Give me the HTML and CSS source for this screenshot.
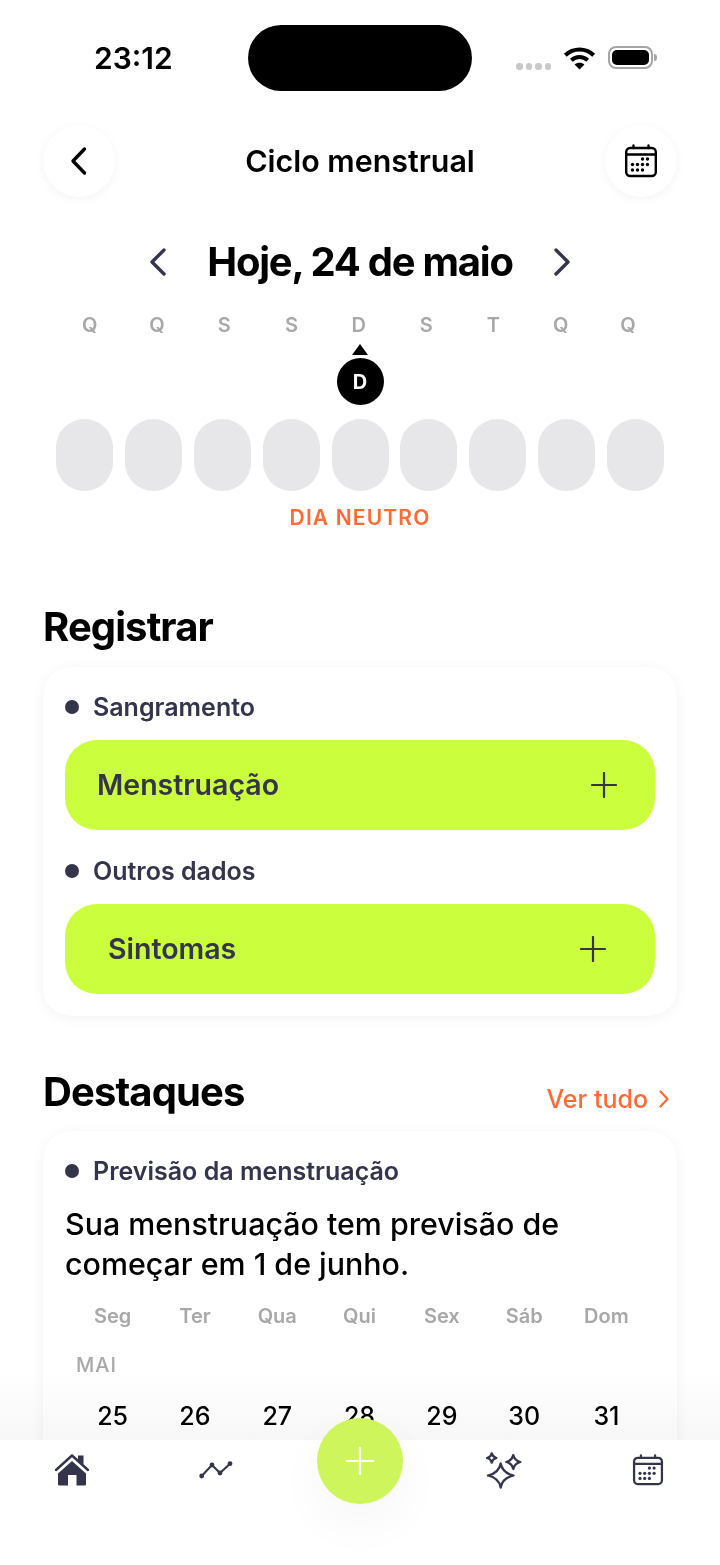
FILE: index.html
```html
<!DOCTYPE html>
<html lang="pt">
<head>
<meta charset="utf-8">
<title>Ciclo menstrual</title>
<link rel="stylesheet" href="styles.css">
</head>
<body>
<div class="screen">
  <div class="status">
    <span class="time">23:12</span>
    <div class="island"></div>
    <div class="status-icons">
      <div class="signal"><i></i><i></i><i></i><i></i></div>
      <svg class="wifi" width="33" height="24" viewBox="0 0 30 22"><path d="M2 8.500C9.500 1.500 20.500 1.500 28 8.500" fill="none" stroke="#000" stroke-width="3.800"/><path d="M7.500 13C11.800 9.200 18.200 9.200 22.500 13" fill="none" stroke="#000" stroke-width="3.600"/><path d="M15 21.500L10.500 17C13 14.800 17 14.800 19.500 17Z" fill="#000"/></svg>
      <div class="battery"><div class="battery-fill"></div></div>
      <div class="battery-cap"></div>
    </div>
  </div>

  <header class="topbar">
    <button class="round-btn">
      <svg width="24" height="30" viewBox="0 0 24 30"><path d="M17.500 3L6 15L17.500 27" fill="none" stroke="#000" stroke-width="3.400" stroke-linecap="round" stroke-linejoin="round"/></svg>
    </button>
    <h1 class="title">Ciclo menstrual</h1>
    <button class="round-btn">
      <svg width="34" height="34" viewBox="0 0 34 34"><rect x="2.200" y="4" width="29.600" height="28" rx="4" fill="none" stroke="#000" stroke-width="2.400"/><path d="M2.200 10.500H31.800M9.500 1.500V4M24.500 1.500V4" stroke="#000" stroke-width="2.400" stroke-linecap="round"/><g fill="#000"><circle cx="18.500" cy="15" r="1.700"/><circle cx="23.500" cy="15" r="1.700"/><circle cx="8.500" cy="20.500" r="1.700"/><circle cx="13.500" cy="20.500" r="1.700"/><circle cx="18.500" cy="20.500" r="1.700"/><circle cx="23.500" cy="20.500" r="1.700"/><circle cx="8.500" cy="26" r="1.700"/><circle cx="13.500" cy="26" r="1.700"/><circle cx="18.500" cy="26" r="1.700"/></g></svg>
    </button>
  </header>

  <div class="date-row">
    <svg width="20" height="30" viewBox="0 0 20 30"><path d="M16 3L4 15L16 27" fill="none" stroke="#34344a" stroke-width="3.400" stroke-linecap="round" stroke-linejoin="round"/></svg>
    <h2 class="date">Hoje, 24 de maio</h2>
    <svg width="20" height="30" viewBox="0 0 20 30"><path d="M4 3L16 15L4 27" fill="none" stroke="#34344a" stroke-width="3.400" stroke-linecap="round" stroke-linejoin="round"/></svg>
  </div>

  <div class="week-letters"><span>Q</span><span>Q</span><span>S</span><span>S</span><span>D</span><span>S</span><span>T</span><span>Q</span><span>Q</span></div>
  <div class="pointer"></div>
  <div class="today">D</div>
  <div class="pills"><i></i><i></i><i></i><i></i><i></i><i></i><i></i><i></i><i></i></div>
  <p class="day-label">DIA NEUTRO</p>

  <h2 class="section registrar">Registrar</h2>
  <section class="card card-register">
    <div class="label"><i></i>Sangramento</div>
    <div class="action action-a"><span>Menstruação</span>
      <svg width="26" height="26" viewBox="0 0 26 26"><path d="M13 1V25M1 13H25" stroke="#34344a" stroke-width="2.200" stroke-linecap="round"/></svg>
    </div>
    <div class="label label-second"><i></i>Outros dados</div>
    <div class="action action-b"><span>Sintomas</span>
      <svg width="26" height="26" viewBox="0 0 26 26"><path d="M13 1V25M1 13H25" stroke="#34344a" stroke-width="2.200" stroke-linecap="round"/></svg>
    </div>
  </section>

  <div class="section-row">
    <h2 class="section">Destaques</h2>
    <div class="see-all">Ver tudo
      <svg width="12" height="20" viewBox="0 0 12 20"><path d="M2.500 2.500L9.500 10L2.500 17.500" fill="none" stroke="#ff6b35" stroke-width="2.200" stroke-linecap="round" stroke-linejoin="round"/></svg>
    </div>
  </div>
  <section class="card card-forecast">
    <div class="label"><i></i>Previsão da menstruação</div>
    <p class="forecast">Sua menstruação tem previsão de<br>começar em 1 de junho.</p>
    <div class="cal cal-head"><span>Seg</span><span>Ter</span><span>Qua</span><span>Qui</span><span>Sex</span><span>Sáb</span><span>Dom</span></div>
    <div class="month">MAI</div>
    <div class="cal cal-days"><span>25</span><span>26</span><span>27</span><span>28</span><span>29</span><span>30</span><span>31</span></div>
  </section>

  <div class="fade"></div>
  <nav class="nav">
    <svg class="nav-home" width="36" height="34" viewBox="0 0 36 34"><path d="M2 17L18 2.500L34 17" fill="none" stroke="#34344a" stroke-width="2.400" stroke-linejoin="round" stroke-linecap="round"/><path d="M24 2.500H29.500V11.500L24 6.800Z" fill="#34344a"/><path d="M18 8L32 20.500V31C32 32 31.500 32.500 30.500 32.500H22.500V22H14V32.500H5.500C4.500 32.500 4 32 4 31V20.500Z" fill="#34344a"/></svg>
    <svg class="nav-trend" width="36" height="20" viewBox="0 0 36 20"><path d="M3.700 16L14 5L22 13L32 3.700" fill="none" stroke="#34344a" stroke-width="2"/><g fill="#34344a"><circle cx="3.700" cy="16" r="2.400"/><circle cx="14" cy="5" r="2.400"/><circle cx="22" cy="13" r="2.400"/><circle cx="32" cy="3.700" r="2.400"/></g></svg>
    <div class="nav-gap"></div>
    <svg class="nav-spark" width="38" height="38" viewBox="0 0 38 38"><g fill="none" stroke="#34344a" stroke-width="2.300" stroke-linejoin="round"><path d="M15.700 11.500Q17.500 21 28.500 23.500Q17.500 26 15.700 35.500Q14 26 3 23.500Q14 21 15.700 11.500Z"/><path d="M6.700 1.300Q7.500 5 11.400 6Q7.500 7 6.700 10.700Q6 7 2 6Q6 5 6.700 1.300Z"/><path d="M28.300 3Q29.500 8.500 35.300 10Q29.500 11.500 28.300 17Q27 11.500 21.300 10Q27 8.500 28.300 3Z"/></g></svg>
    <svg class="nav-cal" width="32" height="34" viewBox="0 0 34 34"><rect x="2.200" y="4" width="29.600" height="28" rx="4" fill="none" stroke="#34344a" stroke-width="2.400"/><path d="M2.200 10.500H31.800M9.500 1.500V4M24.500 1.500V4" stroke="#34344a" stroke-width="2.400" stroke-linecap="round"/><g fill="#34344a"><circle cx="18.500" cy="15" r="1.700"/><circle cx="23.500" cy="15" r="1.700"/><circle cx="8.500" cy="20.500" r="1.700"/><circle cx="13.500" cy="20.500" r="1.700"/><circle cx="18.500" cy="20.500" r="1.700"/><circle cx="23.500" cy="20.500" r="1.700"/><circle cx="8.500" cy="26" r="1.700"/><circle cx="13.500" cy="26" r="1.700"/><circle cx="18.500" cy="26" r="1.700"/></g></svg>
  </nav>
  <button class="fab">
    <svg width="28" height="28" viewBox="0 0 28 28"><path d="M14 1V27M1 14H27" stroke="#fff" stroke-width="2.200" stroke-linecap="round"/></svg>
  </button>
</div>
</body>
</html>
```
FILE: styles.css
```css
* { box-sizing: border-box; margin: 0; padding: 0; }
html, body { width: 720px; height: 1565px; overflow: hidden; background: #fff; }
body { font-family: Inter, "Noto Sans", sans-serif; color: #000; }
.screen { position: relative; width: 720px; height: 1565px; overflow: hidden; background: #fff; }

.status { position: relative; height: 125px; }
.time { position: absolute; left: 94px; top: 40px; font-size: 30px; line-height: 36px; font-weight: 600; }
.island { position: absolute; left: 248px; top: 25px; width: 224px; height: 66px; border-radius: 33px; background: #000; }
.status-icons { position: absolute; left: 516px; top: 45px; width: 142px; height: 28px; }
.signal { position: absolute; left: 0; top: 18px; display: flex; gap: 3px; }
.signal i { width: 6.500px; height: 6.500px; border-radius: 50%; background: #c9c9c9; }
.wifi { position: absolute; left: 47px; top: 1px; }
.battery { position: absolute; left: 92px; top: 1px; width: 45px; height: 23px; border: 2px solid #a5a5a5; border-radius: 8px; padding: 2px; }
.battery-fill { width: 100%; height: 100%; border-radius: 5px; background: #000; }
.battery-cap { position: absolute; left: 138px; top: 9px; width: 3px; height: 7px; border-radius: 0 3px 3px 0; background: #a5a5a5; }

.topbar { display: flex; align-items: center; justify-content: space-between; padding: 0 43px; height: 72px; }
.round-btn { width: 72px; height: 72px; border: 0; border-radius: 50%; background: #fff; box-shadow: 0 2px 10px rgba(0,0,0,.05); display: flex; align-items: center; justify-content: center; }
.title { font-size: 30.400px; font-weight: 600; line-height: 36px; }

.date-row { display: flex; align-items: center; justify-content: center; gap: 39px; margin-top: 41px; height: 48px; }
.date { font-size: 40px; font-weight: 700; line-height: 48px; letter-spacing: -1.250px; }

.week-letters { display: grid; grid-template-columns: repeat(9, 67.300px); padding-left: 56px; margin-top: 26px; height: 26px; }
.week-letters span { text-align: center; font-size: 20px; line-height: 26px; font-weight: 600; color: #a8a8a8; }
.pointer { width: 0; height: 0; margin: 6px auto 0; border-left: 8px solid transparent; border-right: 8px solid transparent; border-bottom: 11px solid #000; }
.today { width: 47px; height: 47px; margin: 3px auto 0; border-radius: 50%; background: #000; color: #fff; font-size: 20px; font-weight: 700; display: flex; align-items: center; justify-content: center; }
.pills { display: flex; gap: 11.875px; padding-left: 56px; margin-top: 14px; }
.pills i { flex: none; width: 57px; height: 72px; border-radius: 28.500px; background: #e7e7e9; }
.day-label { margin-top: 13px; text-align: center; font-size: 21px; line-height: 28px; font-weight: 600; letter-spacing: 1.150px; color: #ff6b35; }

.section { font-size: 40px; line-height: 48px; font-weight: 700; letter-spacing: -.9px; }
.registrar { margin: 71px 0 0 43px; }

.card { margin: 16px 43px 0; background: #fff; border-radius: 28px; box-shadow: 0 2px 14px rgba(0,0,0,.05); padding: 25px 22px 22px; }
.card-register { height: 349px; }
.label { display: flex; align-items: center; gap: 14px; font-size: 25px; line-height: 30px; font-weight: 600; color: #34344a; }
.label i { width: 14px; height: 14px; border-radius: 50%; background: #34344a; }
.label-second { margin-top: 26px; }
.action { margin-top: 18px; height: 90px; border-radius: 32px; background: #cbff3d; display: flex; align-items: center; justify-content: space-between; font-size: 28.500px; font-weight: 600; color: #34344a; }
.action span { margin-top: -2px; }
.action-a { padding: 0 38px 0 32px; }
.action-b { padding: 0 49px 0 43px; }

.section-row { display: flex; align-items: flex-start; justify-content: space-between; margin: 52px 50px 0 43px; height: 48px; }
.see-all { display: flex; align-items: center; gap: 10px; margin-top: 16px; font-size: 25px; line-height: 30px; font-weight: 500; color: #ff6b35; }

.card-forecast { margin-top: 15px; height: 400px; }
.forecast { margin-top: 19px; font-size: 30.400px; line-height: 39.500px; font-weight: 500; }
.cal { display: grid; grid-template-columns: repeat(7, 82.300px); margin-left: 6.500px; }
.cal span { text-align: center; }
.cal-head { margin-top: 19px; font-size: 20px; line-height: 26px; font-weight: 600; color: #a8a8a8; }
.month { margin: 23px 0 0 11px; font-size: 20px; line-height: 26px; font-weight: 500; letter-spacing: 1px; color: #a8a8a8; }
.cal-days { margin-top: 22px; font-size: 25px; line-height: 32px; font-weight: 500; }

.fade { position: absolute; left: 0; top: 1370px; width: 720px; height: 70px; background: linear-gradient(#fff, #f7f7f7); mix-blend-mode: multiply; }
.nav { position: absolute; left: 0; top: 1440px; width: 720px; height: 125px; background: #fff; display: grid; grid-template-columns: repeat(5, 144px); justify-items: center; align-items: start; padding-top: 12px; }
.nav-home { margin-top: 1px; }
.nav-trend { margin-top: 8px; }
.nav-cal { margin-top: 1px; }
.nav-gap { width: 86px; }
.fab { position: absolute; left: 317px; top: 1418px; width: 86px; height: 86px; border: 0; border-radius: 50%; background: #cef55c; display: flex; align-items: center; justify-content: center; box-shadow: 0 20px 50px rgba(0,0,0,.04); }
```
